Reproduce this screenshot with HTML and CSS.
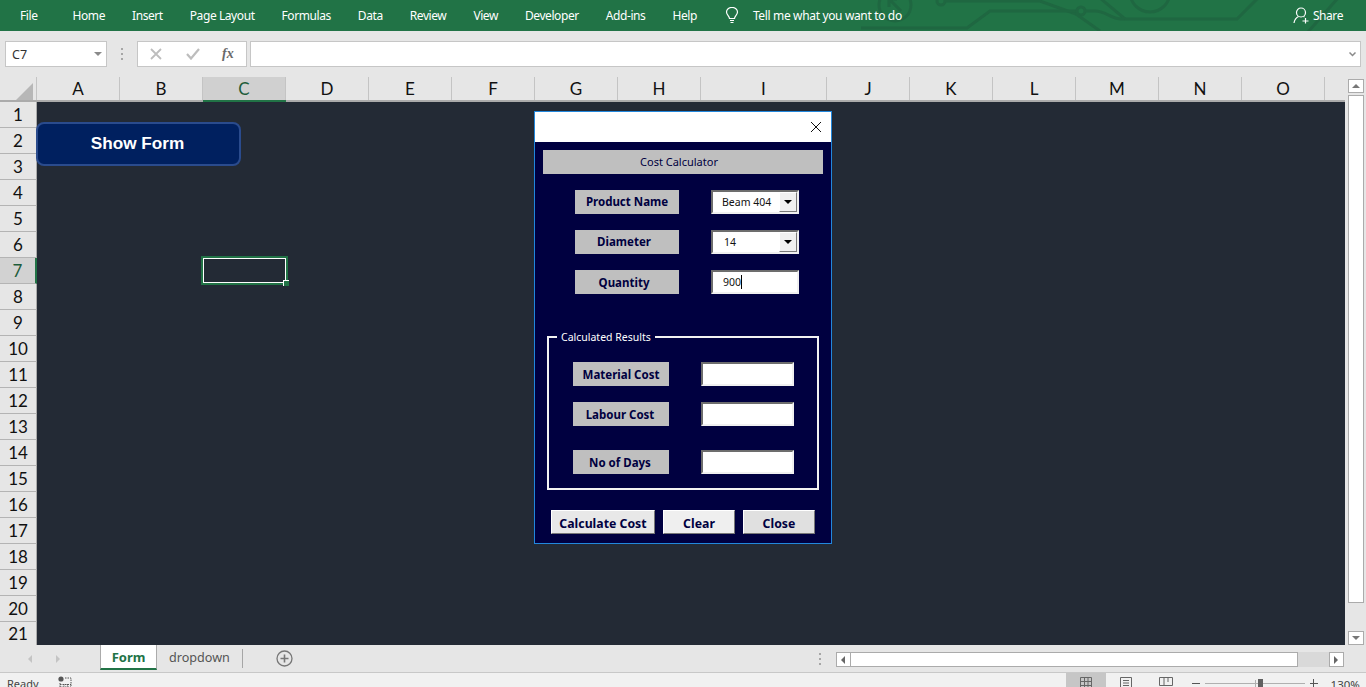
FILE: index.html
```html
<!DOCTYPE html>
<html lang="en">
<head>
  <meta charset="UTF-8" />
  <title>Cost Calculator</title>
  <link rel="stylesheet" href="styles.css">
</head>
<body>

<div class="ribbon">
  <svg class="ribbon-art" width="500" height="31" viewBox="860 0 500 31" fill="none" stroke="#1f6741" stroke-width="3">
    <circle cx="895" cy="5" r="16"/>
    <path d="M889 -1 L901 11 M889 -1 H897 M889 -1 V7"/>
    <circle cx="941" cy="1" r="4"/>
    <path d="M945 1 H1040 L1076 14"/>
    <path d="M861 28 H967 L990 11 H1076"/>
    <circle cx="1081" cy="11" r="4"/>
    <path d="M1085 11 H1095 C1105 11 1110 18 1120 19 H1237 L1258 -2"/>
    <path d="M1100 -2 L1125 19 M1076 14 L1100 31"/>
    <circle cx="1150" cy="-8" r="20"/>
    <path d="M1338 -2 L1308 32"/>
  </svg>
  <span class="tab tab-file">File</span>
  <span class="tab">Home</span>
  <span class="tab">Insert</span>
  <span class="tab">Page Layout</span>
  <span class="tab">Formulas</span>
  <span class="tab">Data</span>
  <span class="tab">Review</span>
  <span class="tab">View</span>
  <span class="tab">Developer</span>
  <span class="tab">Add-ins</span>
  <span class="tab">Help</span>
  <div class="tell-me">
    <svg width="14" height="17" viewBox="0 0 14 17" fill="none" stroke="#fff" stroke-width="1.2">
      <path d="M4.5 11.5 C4.5 9 1.5 8 1.5 5 A5.5 4.6 0 0 1 12.5 5 C12.5 8 9.5 9 9.5 11.5 Z"/>
      <path d="M5 13.5 H9 M5.5 15.5 H8.5"/>
    </svg>
    <span>Tell me what you want to do</span>
  </div>
  <div class="share">
    <svg width="17" height="17" viewBox="0 0 17 17" fill="none" stroke="#fff" stroke-width="1.2">
      <circle cx="8" cy="5.5" r="4.5"/>
      <path d="M1 16 C1.5 12.5 3.5 10.5 5.5 9.5 M10.5 9.5 L11.5 10"/>
      <path d="M12.5 11 V16.5 M9.5 14 H15.5"/>
    </svg>
    <span>Share</span>
  </div>
</div>

<div class="formula-bar">
  <div class="name-box">
    <span>C7</span>
    <i class="arrow-down"></i>
  </div>
  <div class="grip"><i></i><i></i><i></i></div>
  <div class="fx-box">
    <svg width="12" height="12" viewBox="0 0 12 12" stroke="#bdbdbd" stroke-width="1.8" fill="none"><path d="M1 1 L11 11 M11 1 L1 11"/></svg>
    <svg width="14" height="12" viewBox="0 0 14 12" stroke="#bdbdbd" stroke-width="2.2" fill="none"><path d="M1 6 L5 10.5 L13 1"/></svg>
    <span class="fx">fx</span>
  </div>
  <div class="formula-input">
    <svg width="7" height="5" viewBox="0 0 7 5" fill="none" stroke="#8a8a8a" stroke-width="1.5"><path d="M0.5 0.5 L3.5 3.5 L6.5 0.5"/></svg>
  </div>
</div>

<div class="workbook">
  <div class="grid">
    <div class="col-heads">
      <div class="corner"><i></i></div>
      <div class="col">A</div>
      <div class="col">B</div>
      <div class="col col-on">C</div>
      <div class="col">D</div>
      <div class="col">E</div>
      <div class="col">F</div>
      <div class="col">G</div>
      <div class="col">H</div>
      <div class="col col-wide">I</div>
      <div class="col">J</div>
      <div class="col">K</div>
      <div class="col">L</div>
      <div class="col">M</div>
      <div class="col">N</div>
      <div class="col">O</div>
    </div>
    <div class="grid-body">
      <div class="row-heads">
        <div class="row">1</div>
        <div class="row">2</div>
        <div class="row">3</div>
        <div class="row">4</div>
        <div class="row">5</div>
        <div class="row">6</div>
        <div class="row row-on">7</div>
        <div class="row">8</div>
        <div class="row">9</div>
        <div class="row">10</div>
        <div class="row">11</div>
        <div class="row">12</div>
        <div class="row">13</div>
        <div class="row">14</div>
        <div class="row">15</div>
        <div class="row">16</div>
        <div class="row">17</div>
        <div class="row">18</div>
        <div class="row">19</div>
        <div class="row">20</div>
        <div class="row row-last">21</div>
      </div>
      <div class="cells">
        <div class="show-form">Show Form</div>
        <div class="selection"><i></i></div>

        <div class="dialog">
          <div class="dialog-title">
            <svg width="10" height="10" viewBox="0 0 10 10" stroke="#111" stroke-width="1" fill="none"><path d="M0 0 L10 10 M10 0 L0 10"/></svg>
          </div>
          <div class="dialog-body">
            <div class="heading">Cost Calculator</div>

            <div class="fields">
              <div class="field">
                <div class="lbl lbl-top">Product Name</div>
                <div class="box combo"><span>Beam 404</span><b class="drop"><i></i></b></div>
              </div>
              <div class="field">
                <div class="lbl lbl-top lbl-left">Diameter</div>
                <div class="box combo"><span class="val-14">14</span><b class="drop"><i></i></b></div>
              </div>
              <div class="field">
                <div class="lbl lbl-top lbl-left lbl-qty">Quantity</div>
                <div class="box"><span class="val-qty">900</span><i class="caret"></i></div>
              </div>
            </div>

            <fieldset class="results">
              <legend>Calculated Results</legend>
              <div class="field field-res">
                <div class="lbl lbl-res">Material Cost</div>
                <div class="box box-res"></div>
              </div>
              <div class="field field-res">
                <div class="lbl lbl-res lbl-nudge">Labour Cost</div>
                <div class="box box-res"></div>
              </div>
              <div class="field field-res field-days">
                <div class="lbl lbl-res lbl-nudge">No of Days</div>
                <div class="box box-res"></div>
              </div>
            </fieldset>

            <div class="buttons">
              <div class="btn btn-calc">Calculate Cost</div>
              <div class="btn btn-small">Clear</div>
              <div class="btn btn-small btn-close">Close</div>
            </div>
          </div>
        </div>
      </div>
    </div>
  </div>

  <div class="vscroll">
    <div class="sb-btn sb-up"><i class="tri-up"></i></div>
    <div class="sb-thumb"></div>
    <div class="sb-btn sb-down"><i class="tri-down"></i></div>
  </div>
</div>

<div class="tabbar">
  <i class="nav-left"></i>
  <i class="nav-right"></i>
  <div class="sheet-tab sheet-on">Form</div>
  <div class="sheet-tab">dropdown</div>
  <div class="tab-sep"></div>
  <svg class="add-sheet" width="17" height="17" viewBox="0 0 17 17" fill="none" stroke="#777" stroke-width="1.3"><circle cx="8.5" cy="8.5" r="7.5"/><path d="M8.5 4.5 V12.5 M4.5 8.5 H12.5" stroke-width="1.6"/></svg>
  <div class="grip grip-tabs"><i></i><i></i><i></i></div>
  <div class="hscroll">
    <div class="hs-btn"><i class="tri-left"></i></div>
    <div class="hs-thumb"></div>
    <div class="hs-track"></div>
    <div class="hs-btn"><i class="tri-right"></i></div>
  </div>
</div>

<div class="statusbar">
  <span class="ready">Ready</span>
  <svg class="macro" width="14" height="14" viewBox="0 0 14 14" fill="none" stroke="#555"><circle cx="3" cy="3" r="2.6" fill="#555" stroke="none"/><path d="M7 2 H13 V13 H2 V7 M2 8.5 H13 M2 11 H13 M6 8 V13 M9.5 8 V13" stroke-dasharray="1.5 1"/></svg>
  <div class="views">
    <div class="view view-on">
      <svg width="14" height="14" viewBox="0 0 14 14" fill="none" stroke="#666"><path d="M1.5 0.5 H12.5 V13.5 H1.5 Z M1.5 4.5 H12.5 M1.5 8.5 H12.5 M5.5 0.5 V13.5 M9 0.5 V13.5"/></svg>
    </div>
    <div class="view">
      <svg width="14" height="14" viewBox="0 0 14 14" fill="none" stroke="#666"><path d="M1.5 0.5 H12.5 V13.5 H1.5 Z M4 3.5 H10 M4 6 H10 M4 8.5 H10"/></svg>
    </div>
    <div class="view">
      <svg width="14" height="14" viewBox="0 0 14 14" fill="none" stroke="#666"><path d="M0.5 0.5 H13.5 V8.5 H0.5 Z M5 0.5 V8.5 M9 0.5 V5"/></svg>
    </div>
  </div>
  <div class="zoom">
    <span class="zoom-minus"></span>
    <div class="slider"><i class="slider-tick"></i><i class="slider-thumb"></i></div>
    <span class="zoom-plus"></span>
    <span class="zoom-val">130%</span>
  </div>
</div>

</body>
</html>
```

FILE: styles.css
```css
html, body {
  margin: 0;
  padding: 0;
}
body {
  width: 1366px;
  height: 687px;
  overflow: hidden;
  font-family: "Noto Sans", sans-serif;
  background: #e6e6e6;
}
i {
  display: block;
}

/* ribbon */
.ribbon {
  position: relative;
  height: 31px;
  background: #217346;
  color: #fff;
  font-size: 12px;
  letter-spacing: -0.42px;
  display: flex;
  align-items: center;
  gap: 27px;
  padding-left: 20px;
  overflow: hidden;
}
.ribbon-art {
  position: absolute;
  left: 860px;
  top: 0;
}
.tab {
  position: relative;
  white-space: nowrap;
}
.tab-file {
  margin-right: 8px;
}
.tell-me {
  position: relative;
  display: flex;
  align-items: center;
  gap: 14px;
  margin-left: 1px;
  letter-spacing: -0.35px;
}
.share {
  position: relative;
  display: flex;
  align-items: center;
  gap: 3px;
  margin-left: auto;
  margin-right: 23px;
}

/* formula bar */
.formula-bar {
  height: 46px;
  box-sizing: border-box;
  padding: 10px 5px 0;
  display: flex;
  align-items: flex-start;
  background: #e6e6e6;
}
.name-box {
  width: 102px;
  height: 26px;
  box-sizing: border-box;
  background: #fff;
  border: 1px solid #c6c6c6;
  display: flex;
  align-items: center;
  justify-content: space-between;
  padding: 0 4px 0 6px;
  font-size: 12.5px;
  color: #333;
}
.arrow-down {
  width: 0;
  height: 0;
  border-left: 4px solid transparent;
  border-right: 4px solid transparent;
  border-top: 4px solid #8a8a8a;
}
.grip {
  display: flex;
  flex-direction: column;
  gap: 3px;
}
.grip i {
  width: 2px;
  height: 2px;
  background: #a6a6a6;
}
.formula-bar .grip {
  margin: 7px 14px 0;
}
.fx-box {
  width: 110px;
  height: 26px;
  box-sizing: border-box;
  background: #fff;
  border: 1px solid #c6c6c6;
  display: flex;
  align-items: center;
  padding-left: 12px;
}
.fx-box svg + svg {
  margin-left: 24px;
}
.fx {
  margin-left: 22px;
  font-family: "Liberation Serif", serif;
  font-style: italic;
  font-weight: bold;
  font-size: 14px;
  color: #6a6a6a;
}
.formula-input {
  width: 1111px;
  height: 26px;
  box-sizing: border-box;
  margin-left: 3px;
  background: #fff;
  border: 1px solid #c6c6c6;
  display: flex;
  align-items: center;
  justify-content: flex-end;
  padding-right: 4px;
}

/* grid */
.workbook {
  height: 568px;
  display: flex;
}
.grid {
  width: 1345px;
  display: flex;
  flex-direction: column;
}
.col-heads {
  height: 25px;
  box-sizing: border-box;
  display: flex;
  border-bottom: 2px solid #ababab;
  background: #e6e6e6;
  font-family: Lato, sans-serif;
  font-size: 17px;
  color: #111;
}
.corner {
  width: 37px;
  height: 23px;
  box-sizing: border-box;
  border-right: 1px solid #c4c4c4;
  position: relative;
}
.corner i {
  position: absolute;
  right: 3px;
  bottom: 0;
  width: 0;
  height: 0;
  border-left: 17px solid transparent;
  border-bottom: 17px solid #b7b7b7;
}
.col {
  width: 83px;
  box-sizing: border-box;
  display: flex;
  align-items: center;
  justify-content: center;
  border-right: 1px solid #c4c4c4;
}
.col-wide {
  width: 126px;
}
.col-on {
  background: #d0d0d0;
  color: #1d5c3a;
  box-shadow: 0 2px 0 #217346;
}
.grid-body {
  flex: 1;
  display: flex;
  min-height: 0;
}
.row-heads {
  width: 37px;
  flex: none;
  font-family: Lato, sans-serif;
  font-size: 17px;
  color: #111;
}
.row {
  height: 26px;
  box-sizing: border-box;
  display: flex;
  align-items: center;
  justify-content: center;
  border-bottom: 1px solid #b4b4b4;
  border-right: 1px solid #ababab;
}
.row-on {
  background: #d2d2d2;
  color: #1d5c3a;
  border-right: 2px solid #217346;
}
.row-last {
  height: 23px;
  border-bottom: 0;
}
.cells {
  flex: 1;
  position: relative;
  background: #232a35;
}

/* things floating on the sheet */
.show-form {
  position: absolute;
  left: -1px;
  top: 20px;
  width: 205px;
  height: 44px;
  box-sizing: border-box;
  padding: 0 2px 2px 0;
  border: 2px solid #2a4b8d;
  border-radius: 8px;
  background: #00205f;
  color: #fff;
  font-family: "Liberation Sans", sans-serif;
  font-weight: bold;
  font-size: 17.2px;
  display: flex;
  align-items: center;
  justify-content: center;
}
.selection {
  position: absolute;
  left: 166px;
  top: 156px;
  width: 83px;
  height: 25px;
  box-sizing: border-box;
  border: 1px solid #fff;
  outline: 2px solid #217346;
}
.selection i {
  position: absolute;
  right: -4px;
  bottom: -4px;
  width: 5px;
  height: 5px;
  background: #217346;
  border: 1px solid #fff;
  border-right: 0;
  border-bottom: 0;
}

/* user form */
.dialog {
  position: absolute;
  left: 497px;
  top: 9px;
  width: 298px;
  height: 433px;
  box-sizing: border-box;
  border: 1px solid #2287dc;
  display: flex;
  flex-direction: column;
  background: #000040;
}
.dialog-title {
  height: 30px;
  flex: none;
  box-sizing: border-box;
  padding: 0 10px 1px 0;
  background: #fff;
  display: flex;
  align-items: center;
  justify-content: flex-end;
}
.dialog-body {
  padding: 8px 8px 0;
  color: #000040;
  font-size: 11.5px;
}
.heading {
  width: 280px;
  height: 24px;
  box-sizing: border-box;
  padding: 0 8px 2px 0;
  background: #bfbfbf;
  display: flex;
  align-items: center;
  justify-content: center;
  font-size: 11px;
}
.fields {
  display: flex;
  flex-direction: column;
  gap: 16px;
  margin: 16px 0 0 32px;
}
.field {
  display: flex;
  align-items: center;
  gap: 32px;
}
.lbl {
  height: 24px;
  box-sizing: border-box;
  padding-bottom: 2px;
  background: #bfbfbf;
  font-weight: bold;
  display: flex;
  align-items: center;
  justify-content: center;
}
.lbl-top {
  width: 104px;
}
.lbl-left {
  padding-right: 6px;
}
.lbl-qty {
  padding-bottom: 0;
}
.lbl-nudge {
  padding-right: 2px;
}
.lbl-res {
  width: 96px;
  padding-bottom: 0;
}
.box {
  width: 88px;
  height: 24px;
  box-sizing: border-box;
  background: #fff;
  border: 2px solid;
  border-color: #6d6d6d #f0f0f0 #f0f0f0 #6d6d6d;
  color: #111;
  font-size: 10.5px;
  display: flex;
  align-items: center;
}
.box-res {
  width: 93px;
}
.combo span {
  flex: 1;
  padding-left: 9px;
}
.combo .val-14 {
  padding-left: 11px;
}
.drop {
  width: 18px;
  height: 20px;
  box-sizing: border-box;
  background: #f0f0f0;
  border: 1px solid;
  border-color: #fff #7a7a7a #7a7a7a #fff;
  display: flex;
  align-items: center;
  justify-content: center;
}
.drop i {
  width: 0;
  height: 0;
  border-left: 4px solid transparent;
  border-right: 4px solid transparent;
  border-top: 4px solid #000;
}
.val-qty {
  padding-left: 10px;
}
.caret {
  width: 1px;
  height: 14px;
  background: #000;
}
.results {
  width: 272px;
  height: 160px;
  box-sizing: border-box;
  margin: 36px 0 0 4px;
  padding: 18px 0 0 24px;
  border: 2px solid #f2f2f2;
  min-width: 0;
}
.results legend {
  margin-left: -16px;
  padding: 0 4px;
  color: #fff;
  font-size: 10.5px;
  line-height: 14px;
}
.field-res {
  margin-bottom: 16px;
}
.field-days {
  margin-top: 24px;
}
.buttons {
  display: flex;
  gap: 8px;
  margin: 20px 0 0 8px;
}
.btn {
  height: 24px;
  box-sizing: border-box;
  padding-top: 2px;
  background: #efefef;
  border: 1px solid;
  border-color: #fff #777 #777 #fff;
  font-weight: bold;
  font-size: 12.3px;
  display: flex;
  align-items: center;
  justify-content: center;
}
.btn-calc {
  width: 104px;
  background: #e8e8e8;
}
.btn-small {
  width: 72px;
}
.btn-close {
  background: #e0e0e0;
}

/* scrollbars */
.vscroll {
  width: 21px;
  box-sizing: border-box;
  padding: 2px 2px 0 3px;
  display: flex;
  flex-direction: column;
  background: #e6e6e6;
}
.sb-btn {
  height: 14px;
  flex: none;
  box-sizing: border-box;
  background: #fff;
  border: 1px solid #ababab;
  display: flex;
  align-items: center;
  justify-content: center;
}
.sb-thumb {
  height: 508px;
  flex: none;
  box-sizing: border-box;
  margin-top: 2px;
  background: #fff;
  border: 1px solid #ababab;
}
.sb-down {
  margin-top: 28px;
}
.tri-up, .tri-down {
  width: 0;
  height: 0;
  border-left: 4px solid transparent;
  border-right: 4px solid transparent;
}
.tri-up {
  border-bottom: 4px solid #777;
}
.tri-down {
  border-top: 4px solid #777;
}
.tri-left, .tri-right {
  width: 0;
  height: 0;
  border-top: 4px solid transparent;
  border-bottom: 4px solid transparent;
}
.tri-left {
  border-right: 4px solid #666;
}
.tri-right {
  border-left: 4px solid #666;
}

/* sheet tabs */
.tabbar {
  height: 28px;
  box-sizing: border-box;
  display: flex;
  align-items: flex-start;
  background: #e6e6e6;
  border-bottom: 1px solid #c8c8c8;
  padding-left: 28px;
  font-size: 12.6px;
}
.nav-left, .nav-right {
  width: 0;
  height: 0;
  margin-top: 10px;
  border-top: 4px solid transparent;
  border-bottom: 4px solid transparent;
}
.nav-left {
  border-right: 4px solid #c4c4c4;
}
.nav-right {
  margin-left: 24px;
  border-left: 4px solid #c4c4c4;
  margin-right: 40px;
}
.sheet-tab {
  height: 25px;
  box-sizing: border-box;
  padding: 0 12px;
  display: flex;
  align-items: center;
  color: #555;
}
.sheet-on {
  width: 57px;
  padding: 0;
  justify-content: center;
  background: #fff;
  color: #217346;
  font-weight: bold;
  font-size: 13px;
  border-left: 1px solid #ababab;
  border-right: 1px solid #ababab;
  border-bottom: 2px solid #217346;
}
.tab-sep {
  width: 1px;
  height: 19px;
  margin: 4px 0 0 0;
  background: #a6a6a6;
}
.add-sheet {
  margin: 5px 0 0 33px;
}
.grip-tabs {
  margin: 8px 0 0 526px;
}
.hscroll {
  width: 508px;
  height: 15px;
  margin: 7px 0 0 15px;
  display: flex;
  background: #d9d9d9;
}
.hs-btn {
  width: 15px;
  flex: none;
  box-sizing: border-box;
  background: #fff;
  border: 1px solid #ababab;
  display: flex;
  align-items: center;
  justify-content: center;
}
.hs-thumb {
  width: 447px;
  flex: none;
  box-sizing: border-box;
  background: #fff;
  border: 1px solid #ababab;
  border-left: 0;
}
.hs-track {
  flex: 1;
}

/* status bar */
.statusbar {
  height: 14px;
  display: flex;
  align-items: flex-start;
  background: #f1f1f1;
  padding-left: 7px;
  font-size: 11px;
  color: #444;
  overflow: hidden;
}
.ready {
  margin-top: 3px;
  line-height: 15px;
}
.macro {
  margin: 3px 0 0 19px;
}
.views {
  display: flex;
  margin-left: 994px;
}
.view {
  width: 40px;
  height: 14px;
  display: flex;
  justify-content: center;
  padding-top: 4px;
  box-sizing: border-box;
}
.view-on {
  background: #c6c6c6;
}
.zoom {
  display: flex;
  align-items: center;
  margin: 7px 0 0 6px;
  height: 6px;
  overflow: visible;
}
.zoom-minus {
  width: 8px;
  height: 1px;
  background: #555;
}
.slider {
  position: relative;
  width: 100px;
  height: 1px;
  margin-left: 5px;
  background: #b0b0b0;
}
.slider-tick {
  position: absolute;
  left: 50px;
  top: -3px;
  width: 1px;
  height: 7px;
  background: #b0b0b0;
}
.slider-thumb {
  position: absolute;
  left: 53px;
  top: -4px;
  width: 5px;
  height: 9px;
  background: #606060;
}
.zoom-plus {
  position: relative;
  width: 8px;
  height: 1px;
  margin-left: 5px;
  background: #555;
}
.zoom-plus::after {
  content: "";
  position: absolute;
  left: 3.5px;
  top: -3.5px;
  width: 1px;
  height: 8px;
  background: #555;
}
.zoom-val {
  margin: 2px 0 0 13px;
  font-size: 11.5px;
  line-height: 15px;
}
```
